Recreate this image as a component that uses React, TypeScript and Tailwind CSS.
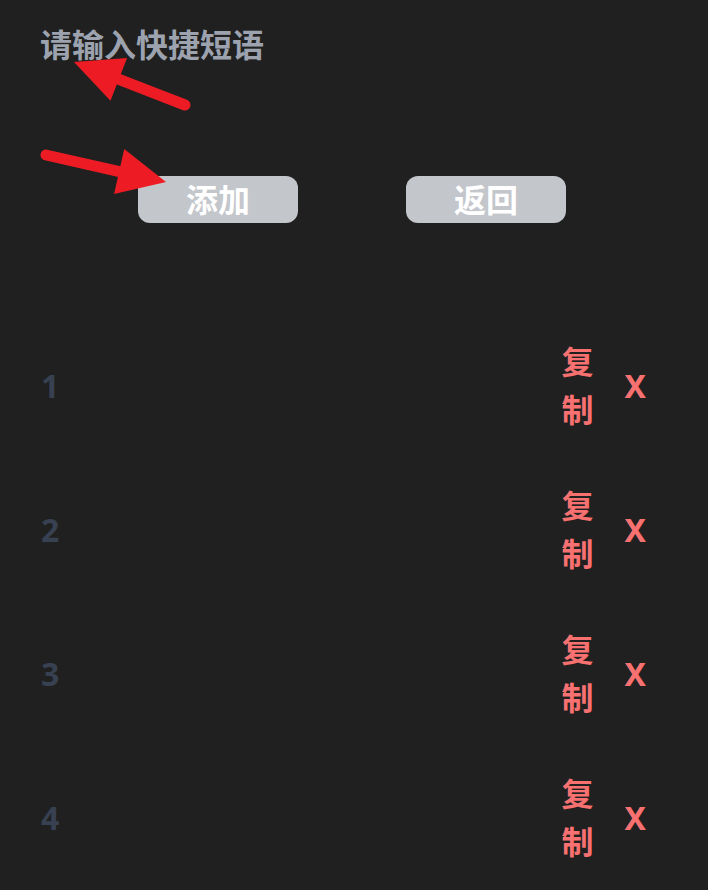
import React from 'react';

const phrases = [1, 2, 3, 4];

const Arrow = ({ x1, y1, x2, y2 }: { x1: number; y1: number; x2: number; y2: number }) => {
  const a = Math.atan2(y2 - y1, x2 - x1);
  const len = 48;
  const w = 23;
  const bx = x2 - Math.cos(a) * len;
  const by = y2 - Math.sin(a) * len;
  const px = -Math.sin(a) * w;
  const py = Math.cos(a) * w;
  return (
    <g>
      <line x1={x1} y1={y1} x2={bx + Math.cos(a) * 6} y2={by + Math.sin(a) * 6} stroke="#ed1c24" strokeWidth={11} strokeLinecap="round" />
      <polygon points={`${x2},${y2} ${bx + px},${by + py} ${bx - px},${by - py}`} fill="#ed1c24" />
    </g>
  );
};

export default function App() {
  return (
    <div
      className="relative w-[708px] h-[890px] overflow-hidden bg-[#202020]"
      style={{ fontFamily: '"Noto Sans", "Noto Sans CJK SC", sans-serif' }}
    >
      <div className="pl-10 pt-[22px]">
        <h1 className="text-[32px] leading-[46px] font-bold text-[#9ca3af]">请输入快捷短语</h1>
      </div>

      <div className="flex pl-[138px] gap-[108px] mt-[108px]">
        <button className="w-40 h-[47px] rounded-xl bg-[#c3c6cb] text-white text-[32px] font-bold leading-none">
          添加
        </button>
        <button className="w-40 h-[47px] rounded-xl bg-[#c3c6cb] text-white text-[32px] font-bold leading-none">
          返回
        </button>
      </div>

      <ul className="mt-[91px]">
        {phrases.map((n) => (
          <li key={n} className="flex items-center h-36 pl-[41px] pr-[62px]">
            <span className="text-[32px] font-bold text-[#374151]">{n}</span>
            <span className="ml-auto w-8 text-[32px] leading-[48px] font-bold text-[#f87171]">复制</span>
            <span className="ml-[31px] text-[32px] font-bold text-[#f87171]">X</span>
          </li>
        ))}
      </ul>

      <svg className="absolute inset-0 pointer-events-none" width={708} height={890}>
        <Arrow x1={185} y1={105} x2={74} y2={62} />
        <Arrow x1={46} y1={155} x2={166} y2={182} />
      </svg>
    </div>
  );
}
